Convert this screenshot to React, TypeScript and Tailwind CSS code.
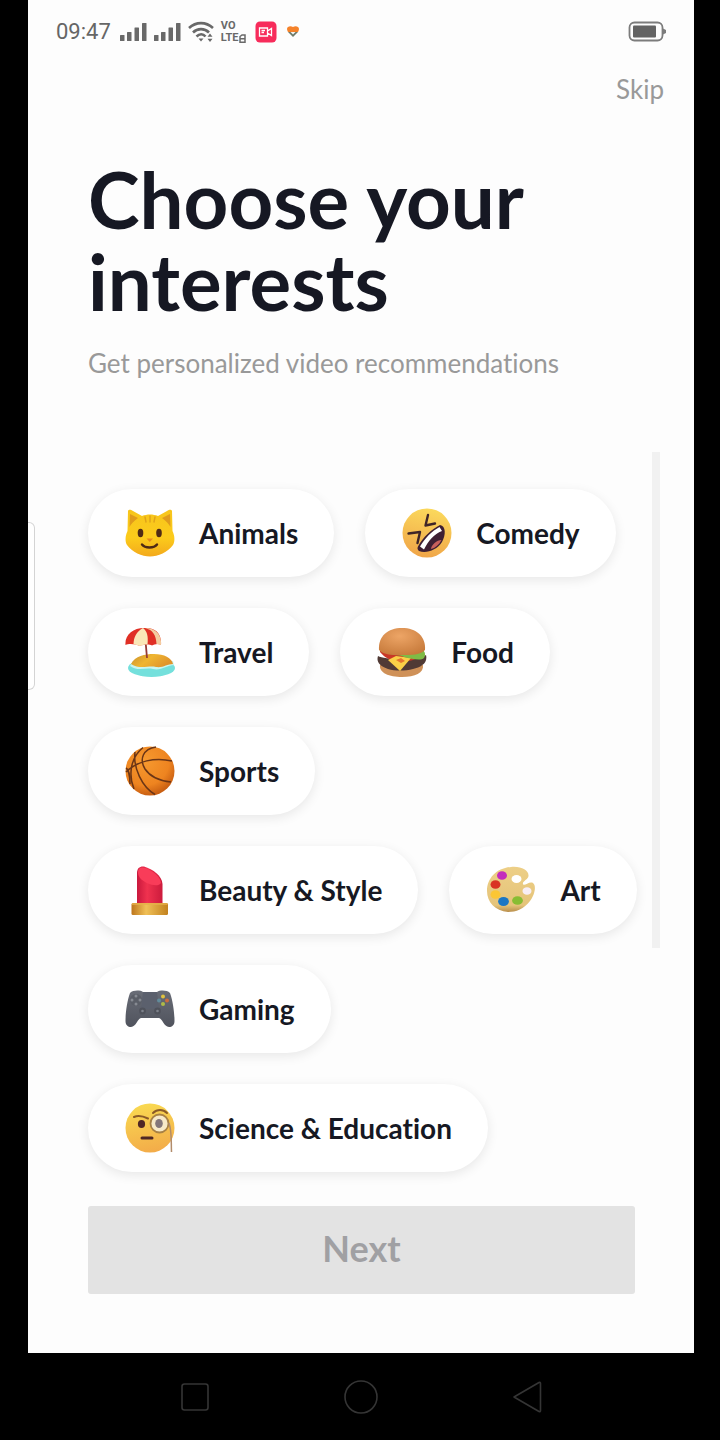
import React, { useState } from "react";

const CatIcon = () => (
  <svg viewBox="0 0 50 50" className="size-[50px]" aria-hidden="true">
    <defs>
      <linearGradient id="cat" x1="0" y1="0" x2="0" y2="1">
        <stop offset="0" stopColor="#f7c51c" />
        <stop offset="0.6" stopColor="#fccb1b" />
        <stop offset="1" stopColor="#f3a91c" />
      </linearGradient>
    </defs>
    <path d="M3 3C4 1 6 2 8 3L17 8C22 6 28 6 33 8L42 3C44 2 46 1 47 3L47.500 23C50 28 50 34 48 37C43 44 33 48.500 25 48.500S7 44 2 37C0 34 0 28 2.500 23Z" fill="url(#cat)" />
    <path d="M5 6L13 10C9 13 6 16 4.500 19ZM45 6L37 10C41 13 44 16 45.500 19Z" fill="#e09b1c" />
    <path d="M25 8V14M20 9L21 14M30 9L29 14" stroke="#e0a21a" strokeWidth="1.400" strokeLinecap="round" />
    <ellipse cx="15.500" cy="25" rx="2.800" ry="4.200" fill="#4f2a15" />
    <ellipse cx="34" cy="25" rx="2.800" ry="4.200" fill="#4f2a15" />
    <path d="M21.500 30.500H28L24.800 34Z" fill="#e58a1f" />
    <path d="M17 36.500C20 40.500 29 40.500 32 36.500" stroke="#4f2a15" strokeWidth="2.400" fill="none" strokeLinecap="round" />
  </svg>
);

const LaughIcon = () => (
  <svg viewBox="0 0 50 50" className="size-[50px]" aria-hidden="true">
    <defs>
      <linearGradient id="laugh" x1="0.6" y1="0" x2="0.4" y2="1">
        <stop offset="0" stopColor="#fbd95c" />
        <stop offset="1" stopColor="#f0a548" />
      </linearGradient>
    </defs>
    <circle cx="25" cy="25" r="24.500" fill="url(#laugh)" />
    <path d="M26 7L23.500 17.500L33 15.500M6.500 25.500L18 24L15.500 35" fill="none" stroke="#3f2528" strokeWidth="2.400" strokeLinejoin="round" strokeLinecap="round" />
    <path d="M16 38.500C21 29 30 21 38 17C44 18 44 27 40 34C35 42 24 46 17 43C15.500 41.500 15 40 16 38.500Z" fill="#3d1f33" />
    <path d="M18 38.500C23 30 30 23 37.500 19L40 23C32 26 26 33 22 41.500Z" fill="#fff" />
    <path d="M29 41C29 37 35 32 39.500 32C37 37 33 40 29 41Z" fill="#c7605c" />
  </svg>
);

const BeachIcon = () => (
  <svg viewBox="0 0 50 50" className="size-[50px]" aria-hidden="true">
    <defs>
      <linearGradient id="sand" x1="0" y1="0" x2="1" y2="0.4">
        <stop offset="0" stopColor="#c9912f" />
        <stop offset="0.5" stopColor="#efb530" />
        <stop offset="1" stopColor="#e0942c" />
      </linearGradient>
    </defs>
    <ellipse cx="26.500" cy="41" rx="23.500" ry="9" fill="#74e0dc" />
    <path d="M5 39C14 45 20 40 28 42C36 44 42 38 49 38L48 34H8Z" fill="#c8f5f0" />
    <path d="M6 37C10 29 20 27 29 27C39 27 47 31 48 37C42 37 38 41 31 40C24 38 15 43 6 37Z" fill="url(#sand)" />
    <path d="M20 8L22 31" stroke="#963b36" strokeWidth="1.800" />
    <path d="M0.500 18C-0.500 8 8 1 19 1C30 0 37 6 36 18C33 16 29 17.500 27 18.500C24 17 18 17.500 15 19C11 17 4 16 0.500 18Z" fill="#e02f25" />
    <path d="M18 1C11 5 9 10 8.500 17L15 19C17 17.800 20 17.300 22.500 17.400C23.500 9 22 4 18 1Z" fill="#fae7b8" />
    <path d="M20 1C28 3 31 8 31.500 17L36 18C37 8 31 1 20 1Z" fill="#f3cda0" />
  </svg>
);

const BurgerIcon = () => (
  <svg viewBox="0 0 50 50" className="size-[50px]" aria-hidden="true">
    <defs>
      <radialGradient id="bun" cx="0.45" cy="0.3" r="0.8">
        <stop offset="0" stopColor="#eda566" />
        <stop offset="1" stopColor="#c47738" />
      </radialGradient>
    </defs>
    <path d="M3 38H46C47 46 38 50 25 50S2 46 3 38Z" fill="#cf9158" />
    <path d="M1 29C8 33 42 33 49 28C51 36 44 40 36 42C28 44 18 44 11 42C3 39-1 35 1 29Z" fill="#503a35" />
    <path d="M3 25C8 31 14 34 20 33C33 37 42 31 46 26V22H3Z" fill="#c93827" />
    <path d="M11 33L19 29L34 31L23 44Z" fill="#fad047" />
    <path d="M19 33L24 31L28 34L24 36Z" fill="#e5742e" />
    <path d="M8 25C14 29 22 27 27 30C35 32 44 34 47 31C49 28 48 25 46 23H10Z" fill="#7fbb45" />
    <path d="M2 23C1 9 11 1 25 1S49 9 48 23C43 28 35 28 25 28S7 28 2 23Z" fill="url(#bun)" />
  </svg>
);

const BasketballIcon = () => (
  <svg viewBox="0 0 50 50" className="size-[50px]" aria-hidden="true">
    <defs>
      <radialGradient id="ball" cx="0.4" cy="0.3" r="0.7">
        <stop offset="0" stopColor="#f6992f" />
        <stop offset="0.7" stopColor="#ee8420" />
        <stop offset="1" stopColor="#c95f12" />
      </radialGradient>
    </defs>
    <circle cx="25" cy="25" r="24.500" fill="url(#ball)" />
    <path d="M1 26C12 15 30 11 47 15M31 1C18 3 14 13 20 23C26 32 36 35 46 36M10 6C8 22 17 41 30 48.500M18 1.500C4 13 4 31 9 43M1 22C3 23 5 29 5 38" fill="none" stroke="#6b3516" strokeWidth="1.500" />
  </svg>
);

const LipstickIcon = () => (
  <svg viewBox="0 0 50 50" className="size-[50px]" aria-hidden="true">
    <defs>
      <linearGradient id="stick" x1="0" y1="0" x2="1" y2="0">
        <stop offset="0" stopColor="#c9183d" />
        <stop offset="0.4" stopColor="#f0324f" />
        <stop offset="1" stopColor="#cc1b3c" />
      </linearGradient>
      <linearGradient id="gold" x1="0" y1="0" x2="1" y2="0">
        <stop offset="0" stopColor="#bd761c" />
        <stop offset="0.4" stopColor="#f0c057" />
        <stop offset="1" stopColor="#c2821f" />
      </linearGradient>
    </defs>
    <path d="M12 8C12 3 15 1 19 1.500C28 4 37 11 37.500 19V40H12Z" fill="url(#stick)" />
    <path d="M13 7C13 3 16 1.500 20 3C29 6 36 13 36 18C33 23 20 19 15 13C13.500 11 13 9 13 7Z" fill="#f93c59" />
    <rect x="6.500" y="38" width="36.500" height="12" rx="1.500" fill="url(#gold)" />
    <path d="M7 39H42.500" stroke="#e6b04a" strokeWidth="1.500" />
  </svg>
);

const PaletteIcon = () => (
  <svg viewBox="0 0 50 50" className="size-[50px]" aria-hidden="true">
    <defs>
      <linearGradient id="wood" x1="0" y1="0" x2="0" y2="1">
        <stop offset="0" stopColor="#edcf87" />
        <stop offset="0.85" stopColor="#e5c47a" />
        <stop offset="1" stopColor="#b98e4b" />
      </linearGradient>
    </defs>
    <path d="M25 2C35 1 43 5 42.500 11C42 15 36 16 37 19C38 22 43 16 47 18C51 21 48 31 44 36C38 44 30 47 22 47C9 46 1 37 1 26C1 13 11 3 25 2Z" fill="url(#wood)" />
    <ellipse cx="30.500" cy="14" rx="5" ry="4" fill="#fff" />
    <ellipse cx="41" cy="26" rx="4.500" ry="3.800" fill="#f8eef6" />
    <ellipse cx="16" cy="10.500" rx="5" ry="4.300" fill="#c42bbc" />
    <ellipse cx="9.500" cy="19.500" rx="5" ry="4.300" fill="#d93224" />
    <ellipse cx="9.500" cy="29.500" rx="5" ry="4.300" fill="#fbc634" />
    <ellipse cx="17.500" cy="36.500" rx="5.400" ry="4.600" fill="#1b77c4" />
    <ellipse cx="31.500" cy="35.500" rx="5.400" ry="4.300" fill="#88bd33" />
  </svg>
);

const GamepadIcon = () => (
  <svg viewBox="0 0 50 50" className="size-[50px]" aria-hidden="true">
    <defs>
      <linearGradient id="pad" x1="0" y1="0" x2="0" y2="1">
        <stop offset="0" stopColor="#696d77" />
        <stop offset="1" stopColor="#50535d" />
      </linearGradient>
    </defs>
    <path d="M5 9C8 6 15 6 18 8H32C35 6 42 6 45 9C48 17 49.500 29 49.500 37C49.500 41 47 43 44 43C39 43 37 34 34 34H16C13 34 11 43 6 43C3 43 .500 41 .500 37C.500 29 2 17 5 9Z" fill="url(#pad)" />
    <path d="M18 8H32L34 25H16Z" fill="#5b606d" />
    <circle cx="11" cy="16" r="6" fill="#5a5e67" />
    <g fill="#868a92">
      <circle cx="11" cy="12" r="1.500" />
      <circle cx="7" cy="16" r="1.500" />
      <circle cx="15" cy="16" r="1.500" />
      <circle cx="11" cy="20" r="1.500" />
    </g>
    <circle cx="38" cy="12.500" r="2" fill="#e0c33f" />
    <circle cx="34" cy="16.500" r="2" fill="#618b9b" />
    <circle cx="42" cy="16.500" r="2" fill="#cc6c3d" />
    <circle cx="38" cy="20" r="2" fill="#aebb47" />
    <circle cx="17.500" cy="27" r="3.400" fill="#4f525b" />
    <circle cx="32.500" cy="27" r="3.400" fill="#4f525b" />
    <circle cx="17.500" cy="27" r="1.300" fill="#7d818b" />
    <circle cx="32.500" cy="27" r="1.300" fill="#7d818b" />
  </svg>
);

const MonocleIcon = () => (
  <svg viewBox="0 0 50 50" className="size-[50px]" aria-hidden="true">
    <defs>
      <linearGradient id="mono" x1="0.4" y1="0" x2="0.6" y2="1">
        <stop offset="0" stopColor="#f9d951" />
        <stop offset="1" stopColor="#f3ab49" />
      </linearGradient>
    </defs>
    <circle cx="25" cy="25" r="24.500" fill="url(#mono)" />
    <path d="M9 14C13 12 18 13 23 15.500M28 10C32 6 38 6 42 10" fill="none" stroke="#8b5b27" strokeWidth="2" strokeLinecap="round" />
    <ellipse cx="16.500" cy="21" rx="3.600" ry="4" fill="#4f2725" />
    <circle cx="34.500" cy="20.500" r="9" fill="#f7e9c8" stroke="#a88145" strokeWidth="1.800" />
    <ellipse cx="34" cy="20.500" rx="3.800" ry="4.600" fill="#83767a" />
    <path d="M17 35H27" stroke="#4f2725" strokeWidth="3" strokeLinecap="round" />
    <path d="M44 20C47 29 46 38 46.500 49" stroke="#b28c6b" strokeWidth="1.500" fill="none" />
  </svg>
);

const SignalIcon = () => (
  <svg viewBox="0 0 28 20" className="h-5 w-7" fill="#696969" aria-hidden="true">
    <rect x="0" y="13" width="4.500" height="6" rx="0.500" />
    <rect x="7" y="10" width="4.500" height="9" rx="0.500" />
    <rect x="14.500" y="5.500" width="4.500" height="13.500" rx="0.500" />
    <rect x="22" y="1" width="4.500" height="18" rx="0.500" />
  </svg>
);

const StatusBar = () => (
  <header className="flex h-16 items-center px-7">
    <span className="mr-[9px] font-[Roboto,sans-serif] text-[22px] leading-6 text-[#666]">09:47</span>
    <SignalIcon />
    <span className="w-[6px]" />
    <SignalIcon />
    <svg viewBox="0 0 28 22" className="ml-[6px] h-[22px] w-7" fill="none" stroke="#696969" aria-hidden="true">
      <path d="M1 7C8 0.500 18 0.500 25 7M5 11.500C9.500 7 16.500 7 21 11.500M8.500 15.500C11.500 12.500 15 12.500 17.500 15.500" strokeWidth="2.600" />
      <path d="M10.500 17.500H15.500L13 20.500Z" fill="#696969" stroke="none" />
      <path d="M22 12.500L24.500 15.800H19.500ZM22 21L24.500 17.700H19.500Z" fill="#696969" stroke="none" />
    </svg>
    <div className="ml-[5px] flex flex-col font-[Roboto,sans-serif] text-[11px] leading-3 font-bold text-[#696969]">
      <span>VO</span>
      <span className="flex items-center">
        LTE
        <svg viewBox="0 0 7 9" className="h-[9px] w-[7px]" fill="none" stroke="#696969" strokeWidth="1.500" aria-hidden="true">
          <path d="M1 8.200V2.500L3 1H6V8.200ZM1 4.800H6" />
        </svg>
      </span>
    </div>
    <svg viewBox="0 0 22 22" className="ml-[9px] size-[22px]" aria-hidden="true">
      <rect x="0.500" y="0.500" width="21" height="21" rx="4.500" fill="#f72c5b" />
      <path d="M4.500 7H12.500V15H4.500ZM12.500 10L16.500 7.500V14.500L12.500 12M6.500 9.500H10M6.500 11.500H9" fill="none" stroke="#fff" strokeWidth="1.300" />
    </svg>
    <svg viewBox="0 0 14 14" className="ml-[9px] size-[14px]" aria-hidden="true">
      <path d="M1 4C1 1 5 0.800 7 2C9 0.800 13 1 13 4C13 5 12.500 6 12 7H2C1.500 6 1 5 1 4Z" fill="#f5822a" />
      <path d="M2 7H12L7 12Z" fill="#6d7a68" />
      <path d="M4.500 7H9.500L7 9.500Z" fill="#f3f3f3" />
    </svg>
    <svg viewBox="0 0 38 22" className="ml-auto h-[22px] w-[38px]" aria-hidden="true">
      <rect x="1.500" y="1.500" width="33" height="18" rx="5" fill="none" stroke="#7c7c7c" strokeWidth="1.800" />
      <rect x="5" y="4.500" width="23" height="12" rx="1" fill="#636363" />
      <path d="M35 7.500L38 9V12L35 13.500Z" fill="#7c7c7c" />
    </svg>
  </header>
);

const interests = [
  { label: "Animals", icon: CatIcon },
  { label: "Comedy", icon: LaughIcon },
  { label: "Travel", icon: BeachIcon },
  { label: "Food", icon: BurgerIcon },
  { label: "Sports", icon: BasketballIcon },
  { label: "Beauty & Style", icon: LipstickIcon },
  { label: "Art", icon: PaletteIcon },
  { label: "Gaming", icon: GamepadIcon },
  { label: "Science & Education", icon: MonocleIcon },
];

export default function App() {
  const [selected, setSelected] = useState<string[]>([]);

  const toggle = (label: string) => {
    setSelected((prev) =>
      prev.includes(label) ? prev.filter((l) => l !== label) : [...prev, label]
    );
  };

  return (
    <div className="flex min-h-screen flex-col bg-black font-[Lato,sans-serif] [font-variant-ligatures:none]">
      <div className="relative mr-[26px] ml-7 flex flex-1 flex-col bg-[#fdfdfd]">
        <StatusBar />
        <div className="flex h-[50px] items-center justify-end pr-[30px]">
          <button type="button" className="text-[26px] leading-8 text-[#999]">
            Skip
          </button>
        </div>

        <main className="flex flex-1 flex-col pr-[59px] pl-[60px]">
          <h1 className="mt-11 text-[78px] leading-[82px] font-bold text-[#161823]">
            Choose your interests
          </h1>
          <p className="mt-[23px] text-[26px] leading-9 whitespace-nowrap text-[#999]">
            Get personalized video recommendations
          </p>

          <div className="relative mt-[71px] pt-[37px]">
            <div className="-mr-2 flex flex-wrap gap-[31px]">
              {interests.map(({ label, icon: Icon }) => (
                <button
                  key={label}
                  type="button"
                  aria-pressed={selected.includes(label)}
                  onClick={() => toggle(label)}
                  className="flex h-[88px] items-center gap-6 rounded-full bg-white pr-9 pl-[37px] text-[28px] leading-8 font-bold whitespace-nowrap text-[#161823] shadow-[0_3px_12px_rgba(0,0,0,0.09)]"
                >
                  <Icon />
                  {label}
                </button>
              ))}
            </div>
            {/* scrollbar thumb */}
            <div className="absolute top-0 -right-[25px] h-[496px] w-2 bg-[#f1f1f1]" />
          </div>

          <button
            type="button"
            className="mt-[34px] mb-[59px] h-[88px] rounded-[3px] bg-[#e3e3e3] pb-1 text-[36px] leading-10 font-bold text-[#a0a0a3]"
          >
            Next
          </button>
        </main>

        {/* edge panel handle */}
        <div className="absolute top-[522px] left-0 h-[168px] w-[7px] rounded-r-md border border-l-0 border-[#d4d4d4] bg-white" />
      </div>

      <nav className="mr-[26px] ml-7 flex h-[87px] items-center justify-between px-[150px]">
        <button type="button" aria-label="Recent apps">
          <svg viewBox="0 0 34 34" className="size-[34px]" fill="none" stroke="#353535" strokeWidth="1.600">
            <rect x="4" y="4" width="26" height="26" rx="2.500" />
          </svg>
        </button>
        <button type="button" aria-label="Home">
          <svg viewBox="0 0 34 34" className="size-[34px]" fill="none" stroke="#353535" strokeWidth="1.600">
            <circle cx="17" cy="17" r="16" />
          </svg>
        </button>
        <button type="button" aria-label="Back">
          <svg viewBox="0 0 34 34" className="size-[34px]" fill="none" stroke="#353535" strokeWidth="1.600" strokeLinejoin="round">
            <path d="M4 17L29 2.500Q30.500 2 30.500 3.500V30.500Q30.500 32 29 31.500Z" />
          </svg>
        </button>
      </nav>
    </div>
  );
}
